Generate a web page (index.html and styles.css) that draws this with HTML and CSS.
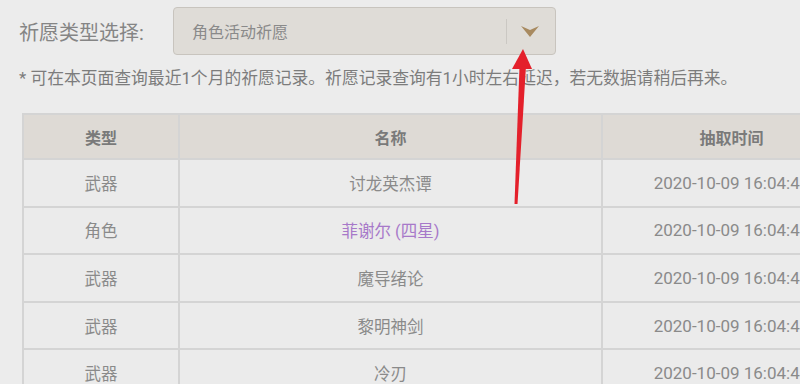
FILE: index.html
```html
<!DOCTYPE html>
<html lang="zh-CN">
<head>
<meta charset="utf-8">
<title>祈愿记录</title>
<link rel="stylesheet" href="styles.css">
</head>
<body>
<div class="page">
  <div class="filter">
    <span class="filter-label">祈愿类型选择:</span>
    <div class="select">
      <span class="select-text">角色活动祈愿</span>
      <span class="select-divider"></span>
      <svg class="select-arrow" width="18" height="11" viewBox="0 0 18 11">
        <path d="M0 0 L9 4 L18 0 L9 11 Z" fill="#a88a60"/>
      </svg>
    </div>
  </div>
  <p class="note">* 可在本页面查询最近1个月的祈愿记录。祈愿记录查询有1小时左右延迟，若无数据请稍后再来。</p>
  <table class="records">
    <colgroup>
      <col class="c-type"><col class="c-name"><col class="c-time">
    </colgroup>
    <thead>
      <tr><th>类型</th><th>名称</th><th>抽取时间</th></tr>
    </thead>
    <tbody>
      <tr><td>武器</td><td>讨龙英杰谭</td><td class="time">2020-10-09 16:04:46</td></tr>
      <tr><td>角色</td><td class="star4">菲谢尔 (四星)</td><td class="time">2020-10-09 16:04:46</td></tr>
      <tr><td>武器</td><td>魔导绪论</td><td class="time">2020-10-09 16:04:46</td></tr>
      <tr><td>武器</td><td>黎明神剑</td><td class="time">2020-10-09 16:04:46</td></tr>
      <tr><td>武器</td><td>冷刃</td><td class="time">2020-10-09 16:04:46</td></tr>
    </tbody>
  </table>
</div>
<svg class="annotation" width="800" height="384" viewBox="0 0 800 384">
  <polygon points="523,49 512,69 532,69" fill="#e4202b"/>
  <polygon points="519.5,66 526,66 517.5,204 514.5,204" fill="#e4202b"/>
</svg>
</body>
</html>
```

FILE: styles.css
```css
html, body {
  margin: 0;
  padding: 0;
  overflow: hidden;
  background: #ececec;
}

body {
  width: 800px;
  height: 384px;
  position: relative;
  font-family: "Roboto", "Noto Sans CJK SC", sans-serif;
  color: #888;
}

.page {
  padding: 7px 0 0 19px;
}

.filter {
  display: flex;
  align-items: center;
}

.filter-label {
  width: 154px;
  font-size: 20px;
  color: #858585;
}

.select {
  width: 381px;
  height: 46px;
  border: 1px solid #c8c4be;
  border-radius: 4px;
  background: #dfdcd7;
  display: flex;
  align-items: center;
  box-sizing: content-box;
}

.select-text {
  padding-left: 18px;
  font-size: 16px;
  color: #8a8a8a;
  flex: 1;
}

.select-divider {
  width: 1px;
  height: 25px;
  background: #cbc8c3;
  margin-right: 14px;
}

.select-arrow {
  margin-right: 16px;
}

.note {
  margin: 11px 0 0 0;
  font-size: 16.8px;
  line-height: 24px;
  color: #7c7c7c;
  white-space: nowrap;
}

.records {
  margin: 23px 0 0 3px;
  border-collapse: collapse;
  width: 838px;
  table-layout: fixed;
}

.c-type { width: 156px; }
.c-name { width: 423px; }
.c-time { width: 259px; }

.records th,
.records td {
  border: 2px solid #d4d4d4;
  text-align: center;
  padding: 0;
  white-space: nowrap;
  overflow: visible;
}

.records th {
  height: 43px;
  background: #dedad5;
  font-size: 16px;
  font-weight: bold;
  color: #7a7a7a;
}

.records td {
  height: 45.6px;
  background: #ebebeb;
  font-size: 16.5px;
  color: #8a8a8a;
}

.records td.time {
  font-size: 17px;
}

.records td.star4 {
  color: #a779c9;
}

.annotation {
  position: absolute;
  left: 0;
  top: 0;
  pointer-events: none;
}
```
